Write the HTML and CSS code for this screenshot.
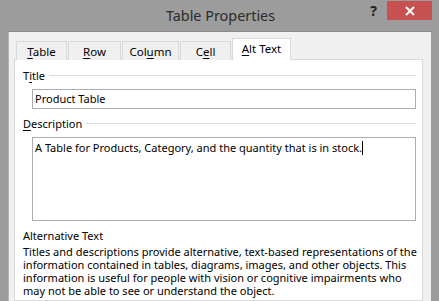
FILE: index.html
```html
<!DOCTYPE html>
<html lang="en">
<head>
    <meta charset="UTF-8">
    <title>Table Properties</title>
    <link rel="stylesheet" href="styles.css">
</head>
<body>
    <div class="window">
        <!-- Title bar -->
        <header class="titlebar">
            <div></div>
            <div class="title">Table Properties</div>
            <div class="controls">
                <span class="help">?</span>
                <button class="close-btn" aria-label="Close">
                    <svg width="10" height="10" viewBox="0 0 10 10">
                        <path d="M1 1 L9 9 M9 1 L1 9" stroke="#fff" stroke-width="2"/>
                    </svg>
                </button>
            </div>
        </header>

        <!-- Dialog body -->
        <div class="dialog">
            <div class="tabs">
                <div class="tab tab-table"><u>T</u>able</div>
                <div class="tab tab-row"><u>R</u>ow</div>
                <div class="tab tab-column">Col<u>u</u>mn</div>
                <div class="tab tab-cell">C<u>e</u>ll</div>
                <div class="tab tab-alt active"><u>A</u>lt Text</div>
            </div>

            <div class="panel">
                <div class="group-label">T<u>i</u>tle</div>
                <div class="text-input">Product Table</div>

                <div class="group-label desc-label"><u>D</u>escription</div>
                <div class="text-area">A Table for Products, Category, and the quantity that is in stock.<span class="caret"></span></div>

                <div class="alt-heading">Alternative Text</div>
                <p class="alt-help">Titles and descriptions provide alternative, text-based representations of the<br>
                    information contained in tables, diagrams, images, and other objects. This<br>
                    information is useful for people with vision or cognitive impairments who<br>
                    may not be able to see or understand the object.</p>
            </div>
        </div>
    </div>
</body>
</html>
```

FILE: styles.css
```css
* {
    margin: 0;
    padding: 0;
    box-sizing: border-box;
}

body {
    font-family: "Noto Sans", "Open Sans", sans-serif;
    font-size: 11px;
    color: #000;
    background: #9c9c9c;
}

u {
    text-decoration-thickness: 1px;
    text-underline-offset: 2px;
}

.window {
    width: 439px;
    height: 301px;
    overflow: hidden;
    display: flex;
    flex-direction: column;
    background: #9c9c9c;
}

/* Title bar */
.titlebar {
    height: 31px;
    flex: none;
    display: grid;
    grid-template-columns: 1fr auto 1fr;
    align-items: start;
}

.title {
    font-size: 14.4px;
    color: #2b2b2b;
    line-height: 31px;
    padding-left: 2px;
}

.controls {
    display: flex;
    justify-content: flex-end;
    align-items: flex-start;
    padding-right: 7px;
    padding-top: 1px;
}

.help {
    font-size: 14px;
    font-weight: bold;
    color: #222;
    line-height: 20px;
    margin-right: 10px;
}

.close-btn {
    width: 45px;
    height: 19px;
    border: none;
    background: #c75050;
    display: flex;
    align-items: center;
    justify-content: center;
}

/* Dialog */
.dialog {
    flex: 1;
    margin: 0 8px;
    background: #f0f0f0;
    border-top: 1px solid #8a8a8a;
    border-left: 1px solid #b4b4b4;
    padding: 6px 8px 0 5px;
    display: flex;
    flex-direction: column;
}

.tabs {
    display: flex;
    align-items: flex-end;
    padding-left: 2px;
    height: 22px;
    position: relative;
    z-index: 1;
    margin-bottom: -1px;
    font-size: 11.5px;
}

.tab {
    height: 19px;
    border: 1px solid #d9d9d9;
    border-bottom: none;
    background: #f0f0f0;
    text-align: center;
    line-height: 19px;
    margin-right: 1px;
}

.tab-table { width: 51px; }
.tab-row { width: 53px; }
.tab-column { width: 57px; }
.tab-cell { width: 51px; }
.tab-alt { width: 59px; }

.tab.active {
    height: 22px;
    background: #fff;
    line-height: 20px;
    border-color: #d9d9d9;
    margin-right: 0;
}

.panel {
    flex: 1;
    background: #fff;
    border: 1px solid #d9d9d9;
    padding: 8px 6px 0 8px;
}

.group-label {
    display: flex;
    align-items: center;
    height: 15px;
    line-height: 15px;
}

.group-label::after {
    content: "";
    flex: 1;
    border-top: 1px solid #dcdcdc;
    margin-left: 4px;
}

.desc-label {
    margin-top: 7px;
}

.text-input {
    margin: 6px 0 0 9px;
    height: 20px;
    border: 1px solid #abadb3;
    padding: 0 2px;
    line-height: 18px;
}

.text-area {
    margin: 6px 0 0 9px;
    height: 84px;
    border: 1px solid #abadb3;
    padding: 2px 2px;
    line-height: 15px;
}

.caret {
    display: inline-block;
    width: 1px;
    height: 14px;
    background: #000;
    vertical-align: -3px;
}

.alt-heading {
    margin-top: 7px;
    line-height: 15px;
}

.alt-help {
    margin-top: 2px;
    line-height: 13px;
    white-space: nowrap;
}
```
